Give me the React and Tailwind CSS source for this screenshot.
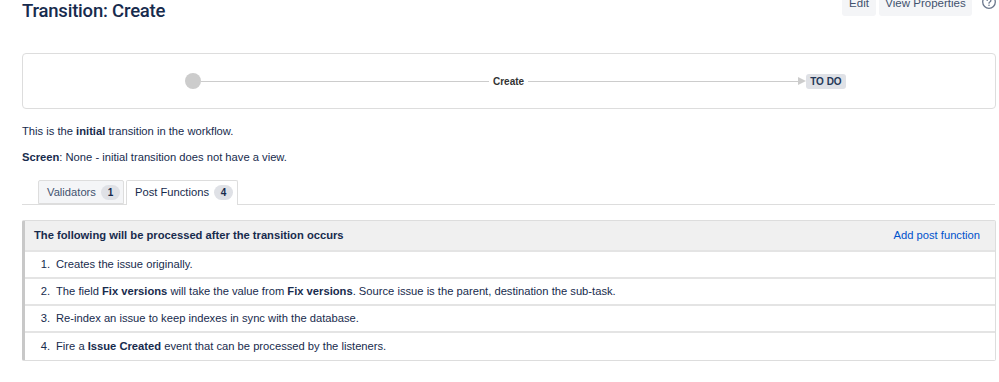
export default function App() {
  const rows = [
    <>Creates the issue originally.</>,
    <>
      The field <b>Fix versions</b> will take the value from <b>Fix versions</b>. Source issue is the parent, destination the sub-task.
    </>,
    <>Re-index an issue to keep indexes in sync with the database.</>,
    <>
      Fire a <b>Issue Created</b> event that can be processed by the listeners.
    </>,
  ];
  return (
    <div className="w-[999px] h-[382px] overflow-hidden bg-white font-['Liberation_Sans',Arial,sans-serif] text-[#172B4D] text-[11.2px]">
      <header className="flex items-start justify-between pl-[22px] pr-[2px]">
        <h1 className="text-[18.5px] leading-[22px] font-medium font-['Roboto',sans-serif] tracking-[-0.2px]">
          Transition: Create
        </h1>
        <div className="flex items-center gap-[3px] -mt-[8px]">
          <button className="h-[24px] w-[34px] rounded-[3px] bg-[#F4F5F7] text-[#42526E] text-[11.5px]">Edit</button>
          <button className="h-[24px] w-[93px] rounded-[3px] bg-[#F4F5F7] text-[#42526E] text-[11.5px]">View Properties</button>
          <svg width="16" height="16" viewBox="0 0 16 16" className="ml-[6px] -mt-[4px]">
            <circle cx="8" cy="8" r="6.3" fill="none" stroke="#6B778C" strokeWidth="1.3" />
            <path d="M6.2 6.4a1.8 1.8 0 1 1 2.6 1.6c-.6.3-.8.6-.8 1.2" fill="none" stroke="#6B778C" strokeWidth="1.3" strokeLinecap="round" />
            <circle cx="8" cy="11.2" r="0.8" fill="#6B778C" />
          </svg>
        </div>
      </header>

      <div className="ml-[22px] mr-[3px] mt-[31px] h-[56px] rounded-[4px] border border-[#DDDDDD] flex items-center pl-[162px]">
        <div className="w-[16px] h-[16px] rounded-full bg-[#CCCCCC]" />
        <div className="w-[288px] h-px bg-[#CCCCCC]" />
        <span className="mx-[4px] text-[10px] font-bold text-[#333333]">Create</span>
        <div className="w-[270px] h-px bg-[#CCCCCC]" />
        <svg width="8" height="8" viewBox="0 0 8 8">
          <path d="M0 0 L8 4 L0 8 Z" fill="#CCCCCC" />
        </svg>
        <span className="h-[15px] px-[4px] rounded-[3px] bg-[#DFE1E6] text-[#253858] text-[10px] font-bold leading-[15px]">TO DO</span>
      </div>

      <p className="ml-[22px] mt-[14px] leading-[16px]">
        This is the <b>initial</b> transition in the workflow.
      </p>
      <p className="ml-[22px] mt-[10px] leading-[16px]">
        <b>Screen</b>: None - initial transition does not have a view.
      </p>

      <div className="ml-[22px] mr-[4px] mt-[15px] border-b border-[#DDDDDD] flex gap-[2px] pl-[16px]">
        <div className="h-[24px] w-[86px] -mb-px border border-[#DDDDDD] bg-[#F4F5F7] rounded-t-[2px] flex items-center pl-[8px] gap-[5px] text-[#42526E]">
          <span>Validators</span>
          <span className="h-[15px] min-w-[19px] px-[5px] rounded-full bg-[#DFE1E6] text-[#172B4D] text-[10px] font-bold leading-[15px] text-center">1</span>
        </div>
        <div className="h-[25px] w-[112px] -mb-px border border-b-0 border-[#DDDDDD] bg-white rounded-t-[2px] flex items-center pl-[8px] gap-[5px] pb-px">
          <span>Post Functions</span>
          <span className="h-[15px] min-w-[19px] px-[5px] rounded-full bg-[#DFE1E6] text-[#172B4D] text-[10px] font-bold leading-[15px] text-center">4</span>
        </div>
      </div>

      <div className="ml-[22px] mr-[3px] mt-[15px] border border-l-[3px] border-[#DDDDDD] border-l-[#C8C8C8] rounded-[2px]">
        <div className="h-[31px] bg-[#F0F0F0] flex items-center justify-between pl-[9px] pr-[15px] border-b-2 border-[#E4E4E4]">
          <span className="font-bold">The following will be processed after the transition occurs</span>
          <span className="text-[#0052CC]">Add post function</span>
        </div>
        {rows.map((r, i) => (
          <div
            key={i}
            className={
              "h-[27px] flex items-center " + (i < rows.length - 1 ? "border-b-2 border-[#E4E4E4]" : "")
            }
          >
            <span className="w-[25px] text-right">{i + 1}.</span>
            <span className="ml-[6px]">{r}</span>
          </div>
        ))}
      </div>
    </div>
  );
}
